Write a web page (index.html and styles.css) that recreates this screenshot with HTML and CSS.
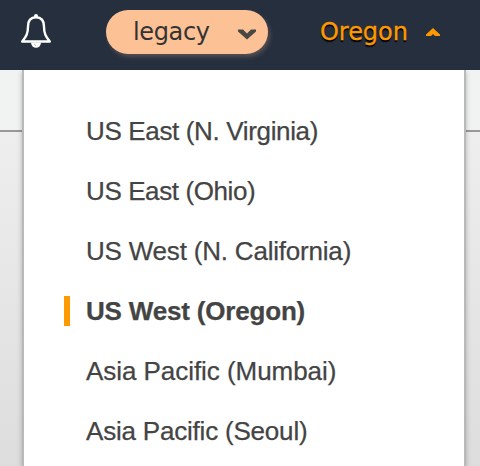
FILE: index.html
```html
<!DOCTYPE html>
<html lang="en">
<head>
<meta charset="utf-8">
<title>Region menu</title>
<link rel="stylesheet" href="styles.css">
</head>
<body>
<header class="nav">
  <svg class="bell" width="34" height="36" viewBox="0 0 34 36">
    <path d="M16 4.2C10.2 4.2 8 8.5 8 13.5C8 20.5 6.3 23.5 2.2 28.5H29.8C25.7 23.5 24 20.5 24 13.5C24 8.5 21.8 4.2 16 4.2Z" fill="none" stroke="#fff" stroke-width="2.4" stroke-linejoin="round"/>
    <circle cx="16" cy="3" r="2" fill="#fff"/>
    <path d="M11 29.5A5 5.2 0 0 0 21 29.5Z" fill="#fff"/>
    <path d="M14 31L16 32.8" stroke="#7c8590" stroke-width=".6"/>
  </svg>
  <button class="account">
    <span>legacy</span>
    <svg width="18" height="11" viewBox="0 0 18 11"><path d="M0 .5H5L9 4.5L13 .5H18V2.5L9 10.5L0 2.5Z" fill="#494743"/></svg>
  </button>
  <div class="region">
    <span>Oregon</span>
    <svg width="14" height="8" viewBox="0 0 14 8"><path d="M7 0L14 6.5V8H9L7 6L5 8H0V6.5Z" fill="#ff9900"/></svg>
  </div>
</header>
<main class="page">
  <ul class="menu">
    <li class="virginia">US East (N. Virginia)</li>
    <li class="ohio">US East (Ohio)</li>
    <li class="california">US West (N. California)</li>
    <li class="selected">US West (Oregon)</li>
    <li class="mumbai">Asia Pacific (Mumbai)</li>
    <li class="seoul">Asia Pacific (Seoul)</li>
  </ul>
</main>
</body>
</html>
```
FILE: styles.css
```css
* { box-sizing: border-box; }
body {
  margin: 0;
  height: 466px;
  overflow: hidden;
  font-family: "Liberation Sans", Arial, sans-serif;
}
.nav {
  display: flex;
  align-items: flex-start;
  height: 70px;
  padding-left: 20px;
  background: #252f3e;
  font: 24px/30px "DejaVu Sans", Verdana, sans-serif;
}
.bell { margin-top: 13px; }
.account {
  display: flex;
  align-items: center;
  justify-content: space-between;
  width: 162px;
  height: 44px;
  margin: 10px 0 0 52px;
  padding: 0 12px 0 27px;
  border: 0;
  border-radius: 22px;
  background: #fdc196;
  box-shadow: 2px 3px 4px rgba(253, 193, 150, .22);
  color: #333;
  font: inherit;
  letter-spacing: -.35px;
}
.account svg { margin-top: 4px; }
.region {
  display: flex;
  align-items: center;
  gap: 18px;
  margin: 17px 0 0 52px;
  color: #ff9900;
  text-shadow: 0 2px 1px #000;
  -webkit-text-stroke: .3px;
}
.region span { letter-spacing: -.05px; }
.region svg { margin-top: 0; }
.page {
  height: 396px;
  padding: 0 14px 0 22px;
  background:
    linear-gradient(#f1f3f3, #f1f3f3) 0 0 / 100% 60px no-repeat,
    linear-gradient(#999, #999) 0 60px / 100% 2px no-repeat,
    linear-gradient(#eee 62px, #ddd);
}
.menu {
  height: 396px;
  margin: 0;
  padding: 46px 0 0 40px;
  overflow: hidden;
  list-style: none;
  background: #fff;
  border: solid #b9b9b9;
  border-width: 0 2px;
  box-shadow: 0 2px 5px rgba(0, 0, 0, .25);
  clip-path: inset(0 -10px);
  color: #444;
  font-size: 26px;
  line-height: 30px;
  -webkit-text-stroke: .25px;
}
.menu li {
  height: 30px;
  margin-bottom: 30px;
  padding-left: 16px;
  border-left: 6px solid transparent;
  white-space: nowrap;
}
.menu .virginia { letter-spacing: -.35px; }
.menu .ohio { letter-spacing: -.4px; }
.menu .california { letter-spacing: -.2px; }
.menu .mumbai { letter-spacing: -.05px; }
.menu .seoul { letter-spacing: -.2px; }
.menu .selected {
  border-left-color: #ff9900;
  font-weight: bold;
  letter-spacing: -.18px;
}
```
